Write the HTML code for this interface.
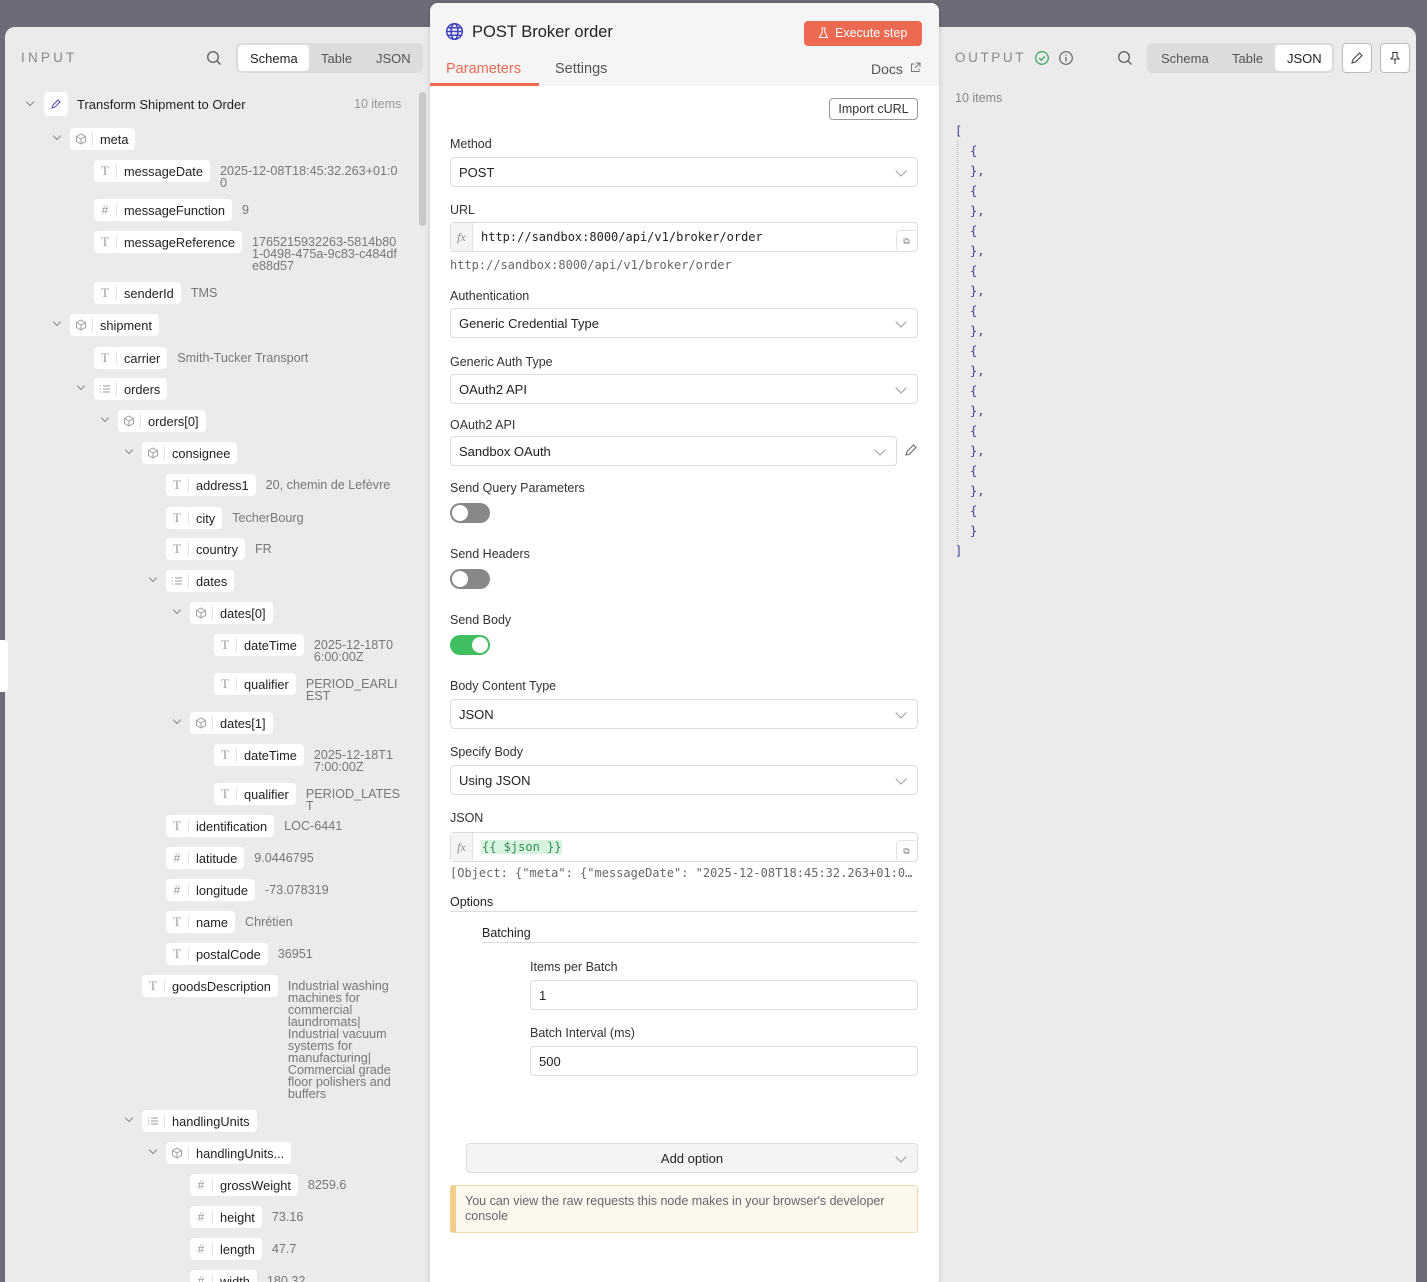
<!DOCTYPE html>
<html><head><meta charset="utf-8">
<style>
*{box-sizing:border-box;margin:0;padding:0}
html,body{width:1427px;height:1282px;overflow:hidden}
body{background:#6c6c78;font-family:"Liberation Sans",sans-serif;color:#333;position:relative}
.abs{position:absolute}
.panel{position:absolute;background:#ebebeb}
.r{position:absolute;display:flex;align-items:flex-start;font-size:13px}
.pill{display:flex;align-items:center;background:#fff;border-radius:4px;height:22px;white-space:nowrap;flex:none}
.ic{width:23px;height:14px;border-right:1px solid #e4e4e4;color:#999;font-size:12px;display:flex;align-items:center;justify-content:center}
.lb{padding:0 7px 0 7px;color:#222;font-size:12.8px}
.v{margin-left:10px;color:#777;font-size:12.6px;line-height:12px;padding-top:5px;word-break:break-all}
.ch{position:absolute;width:6px;height:6px;border-right:1.3px solid #888;border-bottom:1.3px solid #888;transform:rotate(45deg)}
.lab{position:absolute;left:450px;font-size:12.5px;color:#333}
.inp{position:absolute;left:450px;width:468px;height:30px;border:1px solid #dcdcdc;border-radius:4px;background:#fff;font-size:13px;padding:0 8px;display:flex;align-items:center;color:#222}
.sel::after{content:"";position:absolute;right:12px;top:9px;width:7px;height:7px;border-right:1px solid #999;border-bottom:1px solid #999;transform:rotate(45deg)}
.fx{width:22px;height:100%;border-right:1px solid #e2e2e2;background:#f4f4f4;font-family:"Liberation Serif",serif;font-style:italic;color:#888;font-size:12px;display:flex;align-items:center;justify-content:center;margin-left:-8px;margin-right:8px}
.mono{font-family:"DejaVu Sans Mono","Liberation Mono",monospace;font-size:12px}
.tog{position:absolute;left:450px;width:40px;height:20px;border-radius:10px;background:#888}
.tog::after{content:"";position:absolute;left:2px;top:2px;width:16px;height:16px;border-radius:50%;background:#fff}
.tog.on{background:#3fbf5f}.tog.on::after{left:22px}
.exp{position:absolute;right:1px;top:7px;width:20px;height:20px;border-left:1px solid #e2e2e2;border-top:1px solid #e2e2e2;border-radius:4px 0 0 0;font-size:9px;color:#777;text-align:center;line-height:20px}
.j{position:absolute;font-family:"DejaVu Sans Mono",monospace;font-size:12px;color:#3c3c9a}
</style></head><body>

<div class="panel" style="left:5px;top:27px;width:425px;height:1255px;border-radius:10px 0 0 0"></div>
<div class="abs" style="left:0;top:640px;width:8px;height:52px;background:#fff;border-radius:0 4px 4px 0"></div>
<div class="abs" style="left:21px;top:50px;font-size:13.5px;letter-spacing:3.2px;color:#888">INPUT</div>
<svg class="abs" style="left:206px;top:50px" width="16" height="16" viewBox="0 0 16 16"><circle cx="7" cy="7" r="5.3" fill="none" stroke="#666" stroke-width="1.4"/><path d="M11 11l3.5 3.5" stroke="#666" stroke-width="1.4"/></svg>
<div class="abs" style="left:236px;top:43px;width:187px;height:30px;background:#dcdcdc;border-radius:5px"></div>
<div class="abs" style="left:238px;top:45px;width:71px;height:26px;background:#fff;border-radius:4px"></div>
<div class="abs" style="left:250px;top:51px;font-size:13px;color:#222">Schema</div>
<div class="abs" style="left:321px;top:51px;font-size:13px;color:#555">Table</div>
<div class="abs" style="left:376px;top:51px;font-size:13px;color:#555">JSON</div>
<div class="abs" style="left:419px;top:92px;width:7px;height:134px;background:#c8c8c8;border-radius:4px"></div>

<div class="ch" style="left:27px;top:99px"></div>
<div class="abs" style="left:44px;top:92px;width:24px;height:24px;background:#fff;border-radius:4px"></div>
<svg class="abs" style="left:50px;top:98px" width="12" height="12" viewBox="0 0 12 12"><path d="M2 10l1-3 5-5 2 2-5 5z" fill="none" stroke="#4b4bb0" stroke-width="1"/></svg>
<div class="abs" style="left:77px;top:97px;font-size:13px;color:#222">Transform Shipment to Order</div>
<div class="abs" style="left:354px;top:97px;font-size:12.5px;color:#999">10 items</div>

<div id="tree"></div>
<script>
var cube='<svg width="12" height="12" viewBox="0 0 12 12"><path d="M6 1l4.5 2.5v5L6 11 1.5 8.5v-5zM1.5 3.5L6 6l4.5-2.5M6 6v5" fill="none" stroke="#999" stroke-width="0.9"/></svg>';
var list='<svg width="12" height="12" viewBox="0 0 12 12"><path d="M1 3h1M1 6h1M1 9h1M4 3h7M4 6h7M4 9h7" stroke="#999" stroke-width="1"/></svg>';
var T='<span style="font-family:Liberation Serif,serif;font-size:13px">T</span>';
var rows=[
[139,70,1,cube,'meta',''],
[171,94,0,T,'messageDate','2025-12-08T18:45:32.263+01:00'],
[210,94,0,'#','messageFunction','9'],
[242,94,0,T,'messageReference','1765215932263-5814b801-0498-475a-9c83-c484dfe88d57'],
[293,94,0,T,'senderId','TMS'],
[325,70,1,cube,'shipment',''],
[358,94,0,T,'carrier','Smith-Tucker Transport'],
[389,94,1,list,'orders',''],
[421,118,1,cube,'orders[0]',''],
[453,142,1,cube,'consignee',''],
[485,166,0,T,'address1','20, chemin de Lefèvre'],
[518,166,0,T,'city','TecherBourg'],
[549,166,0,T,'country','FR'],
[581,166,1,list,'dates',''],
[613,190,1,cube,'dates[0]',''],
[645,214,0,T,'dateTime','2025-12-18T06:00:00Z'],
[684,214,0,T,'qualifier','PERIOD_EARLIEST'],
[723,190,1,cube,'dates[1]',''],
[755,214,0,T,'dateTime','2025-12-18T17:00:00Z'],
[794,214,0,T,'qualifier','PERIOD_LATEST'],
[826,166,0,T,'identification','LOC-6441'],
[858,166,0,'#','latitude','9.0446795'],
[890,166,0,'#','longitude','-73.078319'],
[922,166,0,T,'name','Chrétien'],
[954,166,0,T,'postalCode','36951'],
[986,142,0,T,'goodsDescription','Industrial washing machines for commercial laundromats| Industrial vacuum systems for manufacturing| Commercial grade floor polishers and buffers'],
[1121,142,1,list,'handlingUnits',''],
[1153,166,1,cube,'handlingUnits...',''],
[1185,190,0,'#','grossWeight','8259.6'],
[1217,190,0,'#','height','73.16'],
[1249,190,0,'#','length','47.7'],
[1281,190,0,'#','width','180.32']];
var h='';
rows.forEach(function(r){
 if(r[2]) h+='<div class="ch" style="left:'+(r[1]-16)+'px;top:'+(r[0]-6)+'px"></div>';
 var gw = r[4]=='goodsDescription'?'word-break:normal;':'';
 h+='<div class="r" style="top:'+(r[0]-11)+'px;left:'+r[1]+'px;width:'+(401-r[1])+'px"><div class="pill"><span class="ic">'+r[3]+'</span><span class="lb">'+r[4]+'</span></div>'+(r[5]?'<div class="v" style="'+gw+'">'+r[5]+'</div>':'')+'</div>';
});
document.getElementById('tree').innerHTML=h;
</script>

<div class="panel" style="left:938px;top:27px;width:478px;height:1255px;border-radius:0 10px 0 0"></div>
<div class="abs" style="left:955px;top:50px;font-size:13.5px;letter-spacing:2.6px;color:#888">OUTPUT</div>
<svg class="abs" style="left:1034px;top:50px" width="16" height="16" viewBox="0 0 16 16"><circle cx="8" cy="8" r="6.3" fill="none" stroke="#3fa760" stroke-width="1.3"/><path d="M5.2 8.2l2 2 3.6-3.8" fill="none" stroke="#3fa760" stroke-width="1.3"/></svg>
<svg class="abs" style="left:1058px;top:50px" width="16" height="16" viewBox="0 0 16 16"><circle cx="8" cy="8" r="6.3" fill="none" stroke="#666" stroke-width="1.2"/><path d="M8 7v4.5M8 4.6v1" stroke="#666" stroke-width="1.3"/></svg>
<svg class="abs" style="left:1117px;top:50px" width="16" height="16" viewBox="0 0 16 16"><circle cx="7" cy="7" r="5.3" fill="none" stroke="#666" stroke-width="1.4"/><path d="M11 11l3.5 3.5" stroke="#666" stroke-width="1.4"/></svg>
<div class="abs" style="left:1147px;top:43px;width:187px;height:30px;background:#dcdcdc;border-radius:5px"></div>
<div class="abs" style="left:1275px;top:45px;width:57px;height:26px;background:#fff;border-radius:4px"></div>
<div class="abs" style="left:1161px;top:51px;font-size:13px;color:#555">Schema</div>
<div class="abs" style="left:1232px;top:51px;font-size:13px;color:#555">Table</div>
<div class="abs" style="left:1287px;top:51px;font-size:13px;color:#222">JSON</div>
<div class="abs" style="left:1342px;top:43px;width:30px;height:30px;border:1px solid #bbb;border-radius:4px;background:#fff"></div>
<svg class="abs" style="left:1350px;top:51px" width="14" height="14" viewBox="0 0 14 14"><path d="M2 12l1-3.5 6.5-6.5 2.5 2.5-6.5 6.5z" fill="none" stroke="#444" stroke-width="1.1"/></svg>
<div class="abs" style="left:1380px;top:43px;width:30px;height:30px;border:1px solid #bbb;border-radius:4px;background:#fff"></div>
<svg class="abs" style="left:1388px;top:51px" width="14" height="14" viewBox="0 0 14 14"><path d="M4 1.5h6M5 1.5v4L3 8h8L9 5.5v-4M7 8v5" fill="none" stroke="#444" stroke-width="1.1"/></svg>
<div class="abs" style="left:955px;top:91px;font-size:12.5px;color:#888">10 items</div>
<div class="abs" style="left:957px;top:140px;height:405px;border-left:1px dotted #bbb"></div>
<div class="j" style="left:955px;top:124px">[</div>
<div id="js"></div>
<script>
var s='';for(var i=0;i<10;i++){s+='<div class="j" style="left:970px;top:'+(144+i*40)+'px">{</div><div class="j" style="left:970px;top:'+(164+i*40)+'px">}'+(i<9?',':'')+'</div>';}
s+='<div class="j" style="left:955px;top:544px">]</div>';document.getElementById('js').innerHTML=s;
</script>

<div class="abs" style="left:430px;top:3px;width:509px;height:1290px;background:#fff;border-radius:8px;box-shadow:0 0 6px rgba(0,0,0,.15)"></div>
<div class="abs" style="left:430px;top:3px;width:509px;height:83px;background:#f5f5f5;border-radius:8px 8px 0 0"></div>
<svg class="abs" style="left:445px;top:22px" width="19" height="19" viewBox="0 0 20 20"><g fill="none" stroke="#3f3fbf" stroke-width="1.6"><circle cx="10" cy="10" r="8.2"/><ellipse cx="10" cy="10" rx="3.6" ry="8.2"/><path d="M2 10h16M3.2 6h13.6M3.2 14h13.6"/></g></svg>
<div class="abs" style="left:472px;top:23px;font-size:16.5px;color:#222">POST Broker order</div>
<div class="abs" style="left:804px;top:21px;width:118px;height:25px;background:#ec6a52;border-radius:4px;color:#fff;font-size:12.5px;line-height:25px;padding-left:31px">Execute step</div>
<svg class="abs" style="left:818px;top:27px" width="11" height="12" viewBox="0 0 11 12"><path d="M3.5 1h4M4.2 1v4L1.5 10.5h8L6.8 5V1" fill="none" stroke="#fff" stroke-width="1"/></svg>
<div class="abs" style="left:446px;top:61px;font-size:14.5px;color:#ec6a52">Parameters</div>
<div class="abs" style="left:430px;top:83px;width:109px;height:3px;background:#ec6a52"></div>
<div class="abs" style="left:555px;top:61px;font-size:14.5px;color:#555">Settings</div>
<div class="abs" style="left:871px;top:61px;font-size:14px;color:#555">Docs</div>
<svg class="abs" style="left:910px;top:62px" width="11" height="11" viewBox="0 0 11 11"><path d="M4.5 2H1.5v7.5H9V6.5M6 1h4v4M10 1L5 6" fill="none" stroke="#777" stroke-width="1"/></svg>
<div class="abs" style="left:829px;top:98px;width:89px;height:22px;border:1px solid #999;border-radius:4px;font-size:12.5px;line-height:20px;text-align:center;color:#333">Import cURL</div>

<div class="lab" style="top:137px">Method</div>
<div class="inp sel" style="top:157px">POST</div>
<div class="lab" style="top:203px">URL</div>
<div class="inp" style="top:222px"><span class="fx">fx</span><span class="mono" style="color:#222">http://sandbox:8000/api/v1/broker/order</span><span class="exp">⧉</span></div>
<div class="lab mono" style="top:258px;color:#666">http://sandbox:8000/api/v1/broker/order</div>
<div class="lab" style="top:289px">Authentication</div>
<div class="inp sel" style="top:308px">Generic Credential Type</div>
<div class="lab" style="top:355px">Generic Auth Type</div>
<div class="inp sel" style="top:374px">OAuth2 API</div>
<div class="lab" style="top:418px">OAuth2 API</div>
<div class="inp sel" style="top:436px;width:447px">Sandbox OAuth</div>
<svg class="abs" style="left:904px;top:443px" width="14" height="14" viewBox="0 0 14 14"><path d="M2 12l1-3.5 6.5-6.5 2.5 2.5-6.5 6.5z" fill="none" stroke="#666" stroke-width="1.1"/></svg>
<div class="lab" style="top:481px">Send Query Parameters</div>
<div class="tog" style="top:503px"></div>
<div class="lab" style="top:547px">Send Headers</div>
<div class="tog" style="top:569px"></div>
<div class="lab" style="top:613px">Send Body</div>
<div class="tog on" style="top:635px"></div>
<div class="lab" style="top:679px">Body Content Type</div>
<div class="inp sel" style="top:699px">JSON</div>
<div class="lab" style="top:745px">Specify Body</div>
<div class="inp sel" style="top:765px">Using JSON</div>
<div class="lab" style="top:811px">JSON</div>
<div class="inp" style="top:832px"><span class="fx">fx</span><span class="mono" style="color:#2f8f4f;background:#d8f3e0;padding:0 1px">{{ $json }}</span><span class="exp">⧉</span></div>
<div class="lab mono" style="top:866px;color:#666">[Object: {"meta": {"messageDate": "2025-12-08T18:45:32.263+01:0…</div>
<div class="lab" style="top:895px;color:#222">Options</div>
<div class="abs" style="left:450px;top:911px;width:468px;border-top:1px solid #ddd"></div>
<div class="lab" style="top:926px;left:482px;color:#222">Batching</div>
<div class="abs" style="left:482px;top:942px;width:436px;border-top:1px solid #ddd"></div>
<div class="lab" style="top:960px;left:530px">Items per Batch</div>
<div class="inp" style="top:980px;left:530px;width:388px">1</div>
<div class="lab" style="top:1026px;left:530px">Batch Interval (ms)</div>
<div class="inp" style="top:1046px;left:530px;width:388px">500</div>
<div class="inp sel" style="top:1143px;left:466px;width:452px;background:#f4f4f4;justify-content:center">Add option</div>
<div class="abs" style="left:450px;top:1185px;width:468px;height:48px;background:#fdf8ee;border:1px solid #f0dcb0;border-left:6px solid #f0cd8c;border-radius:3px;padding:8px 9px;font-size:12.5px;line-height:15px;color:#666">You can view the raw requests this node makes in your browser's developer console</div>
</body></html>
